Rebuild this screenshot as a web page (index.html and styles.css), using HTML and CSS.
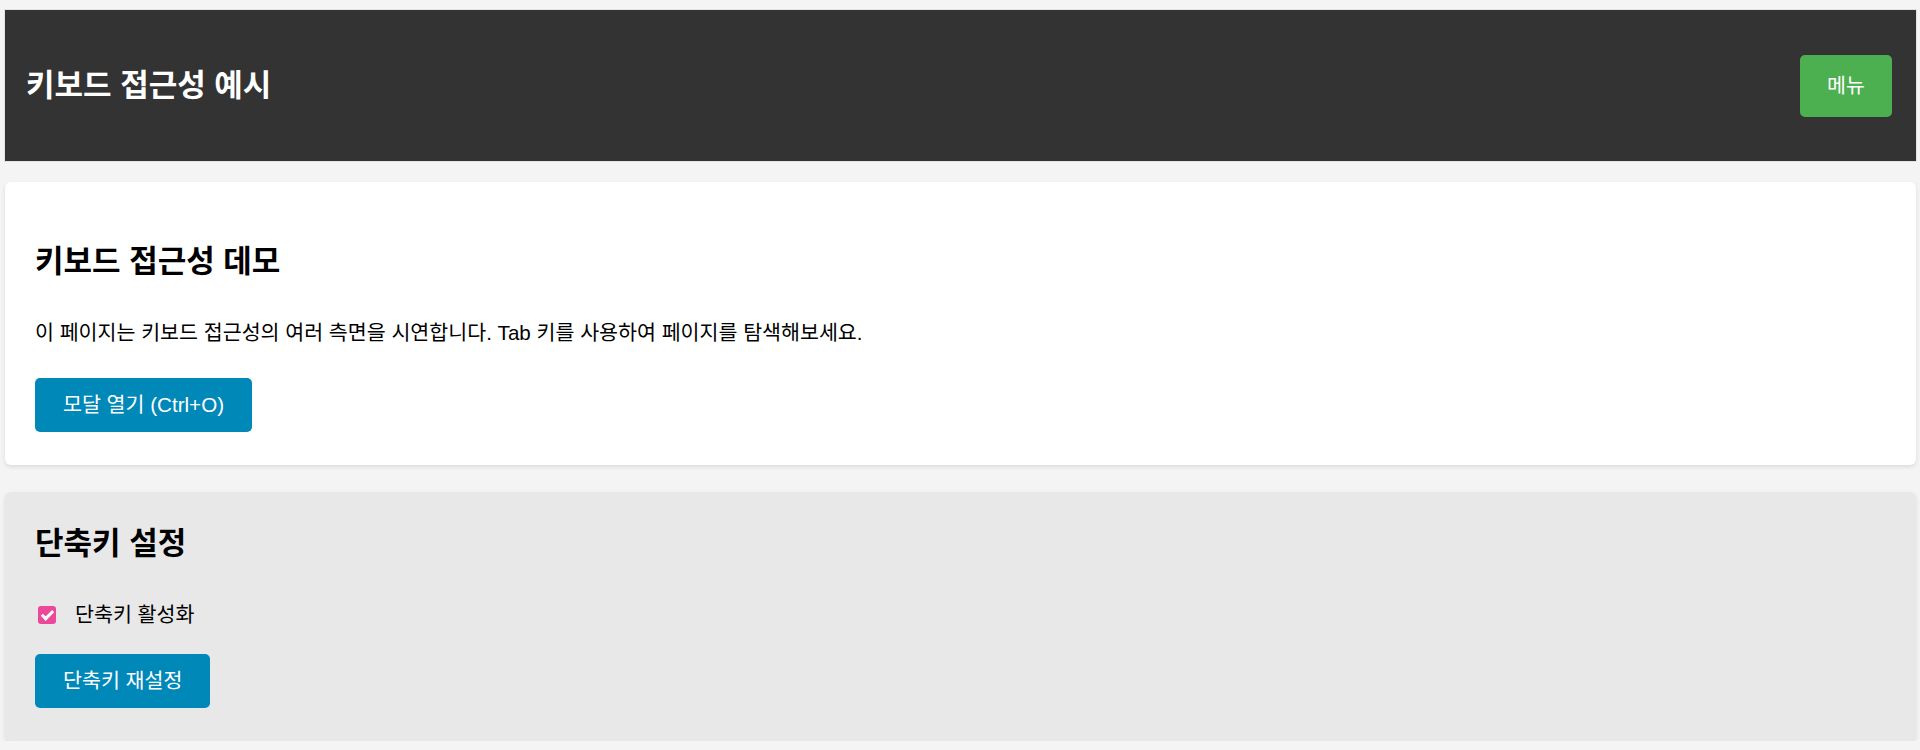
FILE: index.html
```html
<!DOCTYPE html>
<html lang="ko">
<head>
<meta charset="utf-8">
<title>키보드 접근성 예시</title>
<link rel="stylesheet" href="styles.css">
</head>
<body>
  <header class="site-header">
    <h1 class="site-title">키보드 접근성 예시</h1>
    <button class="menu-btn" type="button">메뉴</button>
  </header>
  <main class="content">
    <section class="card card-demo">
      <h2 class="card-title">키보드 접근성 데모</h2>
      <p class="card-text">이 페이지는 키보드 접근성의 여러 측면을 시연합니다. Tab 키를 사용하여 페이지를 탐색해보세요.</p>
      <button class="btn" type="button">모달 열기 (Ctrl+O)</button>
    </section>
    <section class="card card-settings">
      <h2 class="card-title">단축키 설정</h2>
      <label class="check-row">
        <input class="check" type="checkbox" checked>
        <span>단축키 활성화</span>
      </label>
      <button class="btn" type="button">단축키 재설정</button>
    </section>
  </main>
</body>
</html>
```

FILE: styles.css
```css
html, body {
  margin: 0;
  padding: 0;
}

body {
  background: #f4f4f4;
  padding: 10px 4px 0 5px;
  font-family: "Liberation Sans", "Noto Sans CJK KR", sans-serif;
  font-size: 20.6px;
  color: #000;
}

.site-header {
  background: #333;
  height: 151px;
  box-sizing: border-box;
  display: flex;
  align-items: center;
  justify-content: space-between;
  padding: 0 24px 0 21px;
  box-shadow: 0 0 0 1px #e2e2e2;
}

.site-title {
  margin: 0;
  color: #fff;
  font-size: 31px;
  line-height: 35px;
  font-weight: 700;
}

.menu-btn {
  font-family: inherit;
  font-size: 20.6px;
  line-height: 30px;
  color: #fff;
  background: #4caf50;
  border: none;
  border-radius: 5px;
  padding: 16px 27px;
  cursor: pointer;
}

.content {
  display: flex;
  flex-direction: column;
  gap: 27px;
  margin-top: 21px;
}

.card {
  background: #fff;
  border-radius: 6px;
  box-shadow: 0 2px 4px rgba(0, 0, 0, 0.1);
  padding: 35px 30px 33px;
  display: flex;
  flex-direction: column;
  align-items: flex-start;
}

.card-demo {
  padding-top: 63px;
}

.card-settings {
  background: #e8e8e8;
}

.card-title {
  margin: 0 0 39px;
  font-size: 31px;
  line-height: 34.56px;
  font-weight: 700;
}

.card-text {
  margin: 0 0 31px;
  line-height: 28.8px;
}

.check-row {
  display: flex;
  align-items: center;
  height: 28.8px;
  margin: 0 0 24px;
  line-height: 28.8px;
}

.check {
  appearance: none;
  -webkit-appearance: none;
  width: 18px;
  height: 18px;
  margin: 0 19px 0 3px;
  border-radius: 3px;
  background: #ec4899;
  position: relative;
}

.check:checked::after {
  content: "";
  position: absolute;
  left: 6px;
  top: 2px;
  width: 4px;
  height: 9px;
  border: solid #fff;
  border-width: 0 3px 3px 0;
  transform: rotate(45deg);
}

.btn {
  font-family: inherit;
  font-size: 20.6px;
  line-height: 30px;
  color: #fff;
  background: #0088b9;
  border: none;
  border-radius: 5px;
  padding: 12px 28px;
  cursor: pointer;
}
```
